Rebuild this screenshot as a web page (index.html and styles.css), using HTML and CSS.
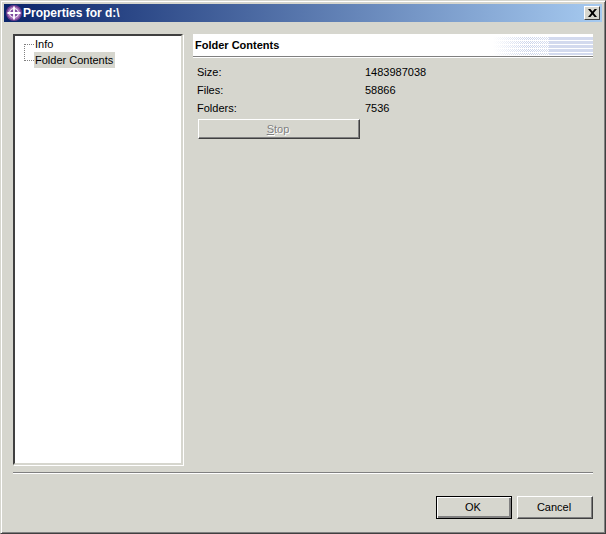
FILE: index.html
```html
<!DOCTYPE html>
<html lang="en">
<head>
  <meta charset="UTF-8" />
  <title>Properties for d:\</title>
  <link rel="stylesheet" href="styles.css">
</head>
<body>
  <div class="window">
    <div class="titlebar">
      <svg class="app-icon" width="16" height="16" viewBox="0 0 16 16">
        <circle cx="8" cy="8" r="8" fill="#6f3d8f"/>
        <circle cx="8" cy="8" r="6.6" fill="#a56fb9"/>
        <circle cx="8" cy="8" r="4.4" fill="#7d4a9e" stroke="#f3e8f6" stroke-width="1.3"/>
        <path d="M8 1.5 V14.5 M1.5 8 H14.5" stroke="#fff" stroke-width="1.8"/>
      </svg>
      <span class="title">Properties for d:\</span>
      <span class="close-btn">
        <svg width="9" height="8" viewBox="0 0 9 8"><path d="M0 0 L2.4 0 L4.5 2.4 L6.6 0 L9 0 L5.7 4 L9 8 L6.6 8 L4.5 5.6 L2.4 8 L0 8 L3.3 4 Z" fill="#000"/></svg>
      </span>
    </div>

    <div class="content">
      <div class="tree">
        <div class="tree-lines"></div>
        <div class="tree-item">Info</div>
        <div class="tree-item selected">Folder Contents</div>
      </div>

      <div class="page">
        <div class="banner">
          <h2>Folder Contents</h2>
          <div class="banner-art"></div>
        </div>
        <div class="rows">
          <div>Size:</div><div>1483987038</div>
          <div>Files:</div><div>58866</div>
          <div>Folders:</div><div>7536</div>
        </div>
        <button class="stop-btn" disabled><span><u>S</u>top</span></button>
      </div>
    </div>

    <div class="separator"></div>

    <div class="buttons">
      <button class="btn default">OK</button>
      <button class="btn">Cancel</button>
    </div>
  </div>
</body>
</html>
```

FILE: styles.css
```css
html, body {
  margin: 0;
  padding: 0;
}

body {
  width: 606px;
  height: 534px;
  overflow: hidden;
  font-family: "Liberation Sans", Arial, sans-serif;
  font-size: 11px;
  color: #000;
}

.window {
  box-sizing: border-box;
  width: 606px;
  height: 534px;
  padding: 3px;
  background-color: #d6d6ce;
  border: 1px solid;
  border-color: #d6d6ce #404040 #404040 #d6d6ce;
  box-shadow: inset 1px 1px 0 #fff, inset -1px -1px 0 #808080;
  display: flex;
  flex-direction: column;
}

.titlebar {
  height: 18px;
  flex: none;
  display: flex;
  align-items: center;
  padding: 0 2px;
  background: linear-gradient(to right, #0a246a, #a6caf0);
  color: white;
}

.app-icon {
  flex: none;
  margin-right: 1px;
}

.title {
  font-size: 12px;
  font-weight: bold;
  flex: 1;
  white-space: nowrap;
}

.close-btn {
  box-sizing: border-box;
  width: 16px;
  height: 14px;
  display: flex;
  align-items: center;
  justify-content: center;
  background-color: #d6d6ce;
  border: 1px solid;
  border-color: #fff #404040 #404040 #fff;
}

.content {
  height: 431px;
  flex: none;
  margin: 12px 9px 0 9px;
  display: flex;
  gap: 10px;
}

.tree {
  position: relative;
  box-sizing: border-box;
  width: 170px;
  flex: none;
  padding-left: 19px;
  background-color: white;
  border: 2px solid;
  border-color: #404040 #d6d6ce #d6d6ce #404040;
  box-shadow: 1px 1px 0 #fff;
}

.tree-lines {
  position: absolute;
  left: 9px;
  top: 8px;
  width: 9px;
  height: 15px;
  border-left: 1px dotted #808080;
  border-top: 1px dotted #808080;
  border-bottom: 1px dotted #808080;
}

.tree-item {
  height: 16px;
  line-height: 16px;
  padding-left: 1px;
}

.selected {
  width: 80px;
  background-color: #d6d6ce;
}

.page {
  flex: 1;
  display: flex;
  flex-direction: column;
}

.banner {
  position: relative;
  box-sizing: border-box;
  height: 23px;
  padding-left: 2px;
  display: flex;
  align-items: center;
  border-bottom: 1px solid #808080;
  box-shadow: 0 1px 0 #fff;
  background-color: white;
}

.banner h2 {
  margin: 0;
  font-size: 11px;
  font-weight: bold;
}

.banner-art {
  position: absolute;
  right: 0;
  top: 3px;
  width: 100px;
  height: 18px;
  background-image:
    repeating-linear-gradient(to bottom, transparent 0, transparent 3px, #fff 3px, #fff 4px),
    linear-gradient(#d3daee, #d3daee),
    linear-gradient(to right, #fff 0, rgba(255, 255, 255, 0.1) 35px, rgba(255, 255, 255, 0.3) 56px),
    conic-gradient(#c5cfe8 25%, #fff 0 50%, #c5cfe8 0 75%, #fff 0);
  background-size: auto, 44px 100%, auto, 2px 2px;
  background-position: 0 0, right top, 0 0, 0 0;
  background-repeat: repeat, no-repeat, repeat, repeat;
}

.rows {
  display: grid;
  grid-template-columns: 168px auto;
  grid-auto-rows: 18px;
  margin: 6px 0 0 4px;
  line-height: 18px;
}

.stop-btn {
  box-sizing: border-box;
  width: 162px;
  height: 20px;
  margin: 2px 0 0 5px;
  padding: 0 2px 0 0;
  font: inherit;
  color: #808080;
  background-color: #d6d6ce;
  border: 1px solid;
  border-color: #fff #404040 #404040 #fff;
  box-shadow: inset -1px -1px 0 #808080;
}

.stop-btn span {
  text-shadow: 1px 1px 0 #fff;
}

.separator {
  flex: none;
  height: 1px;
  margin: 7px 9px 0 9px;
  background-color: #808080;
  border-bottom: 1px solid #fff;
}

.buttons {
  display: flex;
  justify-content: flex-end;
  gap: 5px;
  margin: 22px 9px 0 0;
}

.btn {
  box-sizing: border-box;
  width: 76px;
  height: 23px;
  padding: 0 2px 2px 0;
  font: inherit;
  color: #000;
  background-color: #d6d6ce;
  border: 1px solid;
  border-color: #fff #404040 #404040 #fff;
  box-shadow: inset -1px -1px 0 #808080;
}

.default {
  border: 1px solid #000;
  box-shadow: inset 1px 1px 0 #fff, inset -2px -2px 0 #808080;
}
```
